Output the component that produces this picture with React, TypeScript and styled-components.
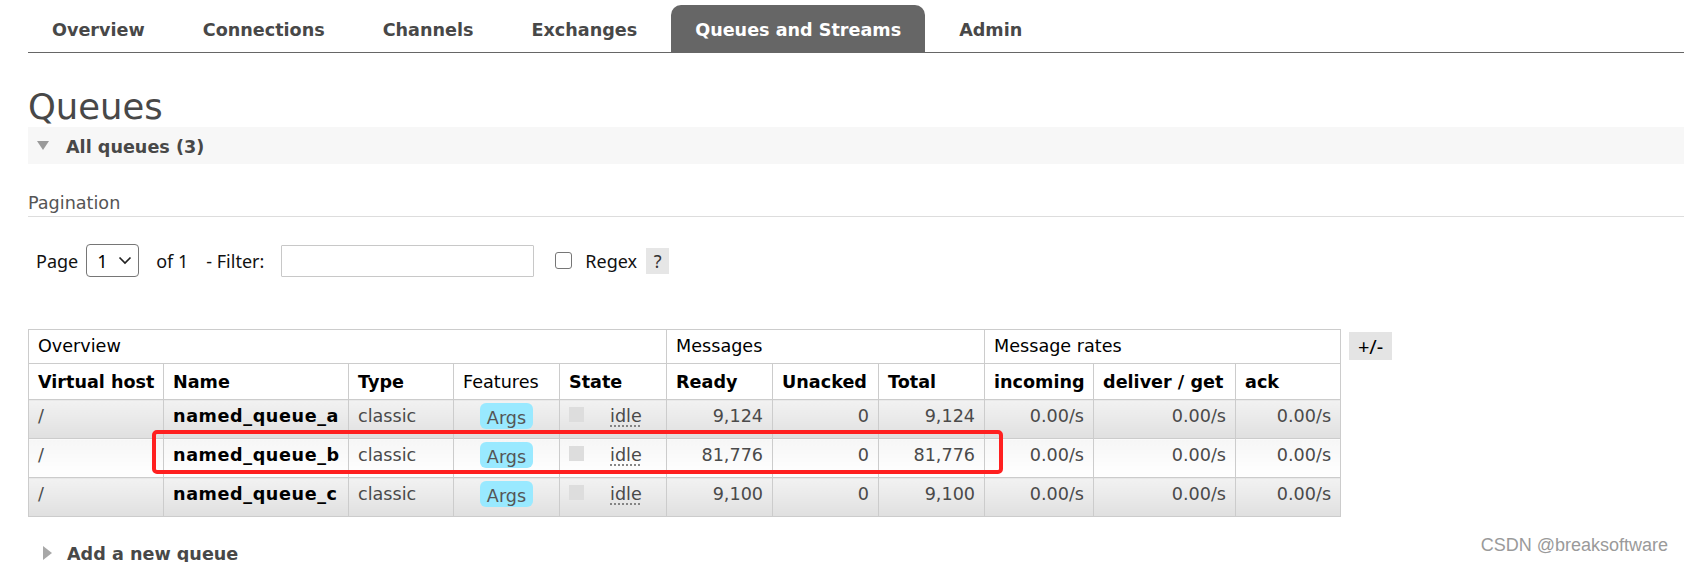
import styled, { createGlobalStyle } from "styled-components";

const VERDANA = `"DejaVu Sans", Verdana, sans-serif`;
const UI = `"Noto Sans", "Segoe UI", sans-serif`;

const GlobalStyle = createGlobalStyle`
  html, body {
    margin: 0;
    padding: 0;
    background: #fff;
    overflow: hidden;
  }
  body {
    font-family: ${VERDANA};
    font-size: 17.6px;
    color: #484848;
  }
`;

const Page = styled.div`
  position: relative;
  height: 562px;
  overflow: hidden;
  padding-left: 28px;
`;

const Menu = styled.ul`
  display: flex;
  margin: 0;
  padding: 5px 0 0;
  list-style: none;
  border-bottom: 1px solid #666;
`;

const Tab = styled.li<{ $active?: boolean }>`
  height: 47px;
  box-sizing: border-box;
  padding: 3px 24px 0;
  margin-right: 10px;
  line-height: 44px;
  font-size: 17.6px;
  font-weight: bold;
  white-space: nowrap;
  color: ${(p) => (p.$active ? "#fff" : "#484848")};
  background: ${(p) => (p.$active ? "#666" : "transparent")};
  border-radius: 10px 10px 0 0;
`;

const Title = styled.h1`
  margin: 34px 0 0;
  height: 40px;
  line-height: 40px;
  font-size: 35.4px;
  font-weight: normal;
  color: #484848;
`;

const SectionHeader = styled.div<{ $open?: boolean }>`
  display: flex;
  align-items: center;
  height: 37px;
  box-sizing: border-box;
  padding-top: 2px;
  background: ${(p) => (p.$open ? "#f7f7f7" : "transparent")};
  font-weight: bold;
  color: #484848;
  white-space: nowrap;
`;

const Arrow = styled.svg<{ $open?: boolean }>`
  flex: none;
  margin-top: -2px;
  margin-left: ${(p) => (p.$open ? "9px" : "15px")};
  margin-right: ${(p) => (p.$open ? "17px" : "15px")};
`;

const SubHeading = styled.h3`
  margin: 28px 0 0;
  padding-bottom: 2px;
  line-height: 22px;
  font-size: 17.6px;
  font-weight: normal;
  color: #555;
  border-bottom: 1px solid #ddd;
`;

const Controls = styled.div`
  display: flex;
  align-items: center;
  height: 33px;
  margin-top: 27px;
  padding-left: 8px;
  font-family: ${UI};
  font-size: 18px;
  color: #111;
`;

const Label = styled.span<{ $ml?: number }>`
  margin-left: ${(p) => p.$ml ?? 0}px;
  white-space: nowrap;
`;

const SelectBox = styled.div`
  display: flex;
  align-items: center;
  justify-content: space-between;
  width: 53px;
  height: 33px;
  box-sizing: border-box;
  margin-left: 8px;
  padding: 0 6px 0 10px;
  border: 1px solid #767676;
  border-radius: 4px;
  color: #000;
`;

const FilterInput = styled.input`
  width: 253px;
  height: 32px;
  box-sizing: border-box;
  margin: 0 0 0 17px;
  border: 1px solid #c8c8c8;
  border-radius: 1px;
  outline: none;
`;

const CheckBox = styled.span`
  width: 17px;
  height: 17px;
  box-sizing: border-box;
  margin-left: 21px;
  border: 1px solid #767676;
  border-radius: 3px;
  background: #fff;
`;

const HelpBox = styled.span`
  display: flex;
  align-items: center;
  justify-content: center;
  width: 23px;
  height: 26px;
  margin-left: 9px;
  background: #e6e6e6;
  color: #333;
`;

const TableArea = styled.div`
  display: flex;
  align-items: flex-start;
  gap: 8px;
  margin-top: 52px;
`;

const TableWrap = styled.div`
  position: relative;
`;

const Table = styled.table`
  border-collapse: collapse;
  table-layout: fixed;
  width: 1312px;
`;

const GroupTh = styled.th`
  border: 1px solid #ccc;
  padding: 5px 9px;
  line-height: 23px;
  text-align: left;
  font-weight: normal;
  color: #000;
  background: #fff;
  white-space: nowrap;
`;

const Th = styled.th<{ $plain?: boolean }>`
  border: 1px solid #ccc;
  padding: 6px 9px 4px;
  line-height: 25px;
  text-align: left;
  font-weight: ${(p) => (p.$plain ? "normal" : "bold")};
  color: #000;
  background: #fff;
  white-space: nowrap;
`;

const Row = styled.tr<{ $alt?: boolean }>`
  & > td {
    background: ${(p) =>
      p.$alt
        ? "linear-gradient(#f2f2f2, #e0e0e0)"
        : "linear-gradient(#f6f6f6, #ffffff)"};
  }
`;

const Td = styled.td<{ $align?: "left" | "right" | "center"; $strong?: boolean }>`
  border: 1px solid #ccc;
  padding: 3px 9px 9px;
  line-height: 26px;
  vertical-align: top;
  white-space: nowrap;
  text-align: ${(p) => p.$align ?? "left"};
  font-weight: ${(p) => (p.$strong ? "bold" : "normal")};
  letter-spacing: ${(p) => (p.$strong ? "0.6px" : "normal")};
  color: ${(p) => (p.$strong ? "#000" : "#4a4a4a")};
`;

const Badge = styled.span`
  display: inline-block;
  width: 53px;
  height: 26px;
  box-sizing: border-box;
  padding-top: 2px;
  line-height: 26px;
  vertical-align: top;
  text-align: center;
  border-radius: 6px;
  background: #99e9ff;
  color: #555;
`;

const StateBox = styled.span`
  display: inline-flex;
  align-items: flex-start;
  gap: 26px;
`;

const StateDot = styled.span`
  width: 15px;
  height: 15px;
  margin-top: 4px;
  background: #ddd;
`;

const StateText = styled.abbr`
  text-decoration: underline dotted #777;
  text-underline-offset: 4px;
  color: #4a4a4a;
`;

const Highlight = styled.div`
  position: absolute;
  left: 124px;
  top: 101px;
  width: 851px;
  height: 44px;
  box-sizing: border-box;
  border: 4px solid #ff2020;
  border-radius: 5px;
  pointer-events: none;
`;

const ToggleColumns = styled.span`
  display: flex;
  align-items: center;
  justify-content: center;
  width: 43px;
  height: 28px;
  margin-top: 3px;
  background: #e4e4e4;
  font-family: ${UI};
  font-size: 20px;
  color: #000;
`;

const Watermark = styled.div`
  position: absolute;
  right: 16px;
  bottom: 6px;
  font-family: "Liberation Sans", Arial, sans-serif;
  font-size: 18px;
  color: #9a9a9a;
`;

const tabs = ["Overview", "Connections", "Channels", "Exchanges", "Queues and Streams", "Admin"];

const colWidths = [135, 185, 105, 106, 107, 106, 106, 106, 109, 142, 105];

const queues = [
  { name: "named_queue_a", ready: "9,124", unacked: "0", total: "9,124" },
  { name: "named_queue_b", ready: "81,776", unacked: "0", total: "81,776" },
  { name: "named_queue_c", ready: "9,100", unacked: "0", total: "9,100" },
];

const Toggle = ({ open }: { open?: boolean }) =>
  open ? (
    <Arrow $open width="12" height="9" viewBox="0 0 12 9">
      <polygon points="0,0 12,0 6,9" fill="#9a9a9a" />
    </Arrow>
  ) : (
    <Arrow width="9" height="14" viewBox="0 0 9 14">
      <polygon points="0,0 9,7 0,14" fill="#a8a8a8" />
    </Arrow>
  );

export default function App() {
  return (
    <>
      <GlobalStyle />
      <Page>
        <Menu>
          {tabs.map((t) => (
            <Tab key={t} $active={t === "Queues and Streams"}>
              {t}
            </Tab>
          ))}
        </Menu>

        <Title>Queues</Title>
        <SectionHeader $open>
          <Toggle open />
          All queues (3)
        </SectionHeader>

        <SubHeading>Pagination</SubHeading>
        <Controls>
          <Label>Page</Label>
          <SelectBox>
            1
            <svg width="14" height="9" viewBox="0 0 14 9">
              <polyline points="1.5,1.5 7,7 12.5,1.5" fill="none" stroke="#222" strokeWidth="1.7" />
            </svg>
          </SelectBox>
          <Label $ml={17}>of 1</Label>
          <Label $ml={18}>- Filter:</Label>
          <FilterInput />
          <CheckBox />
          <Label $ml={13}>Regex</Label>
          <HelpBox>?</HelpBox>
        </Controls>

        <TableArea>
          <TableWrap>
            <Table>
              <colgroup>
                {colWidths.map((w, i) => (
                  <col key={i} style={{ width: w }} />
                ))}
              </colgroup>
              <thead>
                <tr>
                  <GroupTh colSpan={5}>Overview</GroupTh>
                  <GroupTh colSpan={3}>Messages</GroupTh>
                  <GroupTh colSpan={3}>Message rates</GroupTh>
                </tr>
                <tr>
                  <Th>Virtual host</Th>
                  <Th>Name</Th>
                  <Th>Type</Th>
                  <Th $plain>Features</Th>
                  <Th>State</Th>
                  <Th>Ready</Th>
                  <Th>Unacked</Th>
                  <Th>Total</Th>
                  <Th>incoming</Th>
                  <Th>deliver / get</Th>
                  <Th>ack</Th>
                </tr>
              </thead>
              <tbody>
                {queues.map((q, i) => (
                  <Row key={q.name} $alt={i % 2 === 0}>
                    <Td>/</Td>
                    <Td $strong>{q.name}</Td>
                    <Td>classic</Td>
                    <Td $align="center">
                      <Badge>Args</Badge>
                    </Td>
                    <Td>
                      <StateBox>
                        <StateDot />
                        <StateText>idle</StateText>
                      </StateBox>
                    </Td>
                    <Td $align="right">{q.ready}</Td>
                    <Td $align="right">{q.unacked}</Td>
                    <Td $align="right">{q.total}</Td>
                    <Td $align="right">0.00/s</Td>
                    <Td $align="right">0.00/s</Td>
                    <Td $align="right">0.00/s</Td>
                  </Row>
                ))}
              </tbody>
            </Table>
            <Highlight />
          </TableWrap>
          <ToggleColumns>+/-</ToggleColumns>
        </TableArea>

        <SectionHeader style={{ marginTop: 17 }}>
          <Toggle />
          Add a new queue
        </SectionHeader>

        <Watermark>CSDN @breaksoftware</Watermark>
      </Page>
    </>
  );
}
